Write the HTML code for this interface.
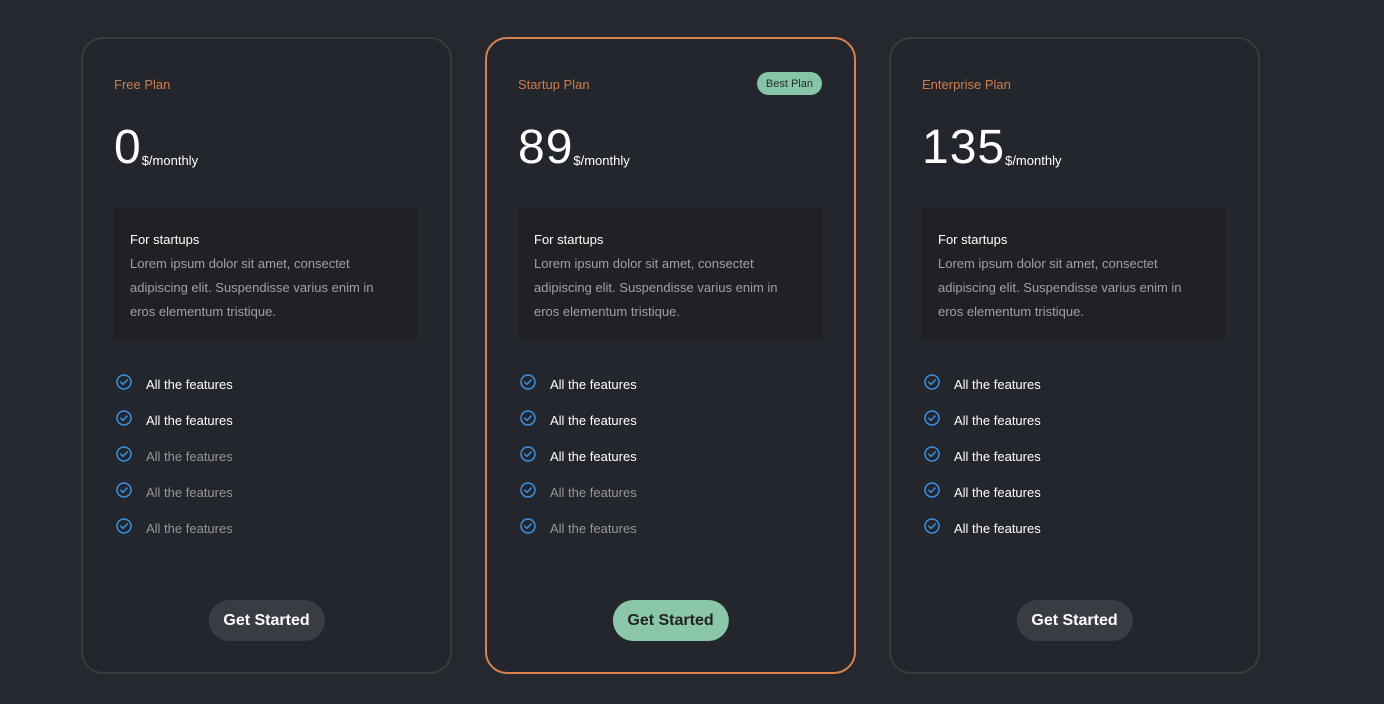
<!DOCTYPE html>
<html><head><style>
*{box-sizing:border-box;margin:0;padding:0}
body{width:1384px;height:704px;background:#262830;font-family:"Liberation Sans",sans-serif;position:relative;overflow:hidden}
.card{position:absolute;top:37px;width:371px;height:637px;border:2px solid #393b3f;border-radius:22px;background:#24262e}
.card.best{border-color:#d8834f}
.title{position:absolute;left:31px;top:38px;font-size:13px;color:#d07c4a}
.badge{position:absolute;right:32px;top:33px;background:#86c5a6;color:#2a2c30;font-size:11px;padding:0 9px;height:23px;line-height:24px;border-radius:12px}
.price{position:absolute;left:31px;top:81px;font-size:48px;color:#fff;line-height:56px;white-space:nowrap;letter-spacing:1px}
.price span{font-size:13px;letter-spacing:0;position:relative;top:2px}
.desc{position:absolute;left:31px;top:169px;width:304px;height:132px;background:#1f2125;padding:24px 16px}
.desc h4{font-weight:normal;font-size:13px;color:#fff;margin-bottom:5px}
.desc p{font-size:13px;line-height:24px;color:#9ea0a4}
.feat{position:absolute;left:31px;top:338px}
.feat div{height:36px;display:flex;align-items:flex-start;font-size:13px;color:#fff}
.feat div.dim{color:#94969a}
.feat svg{margin:0 14px 0 2px;margin-top:-3px}
.btn{position:absolute;left:50%;transform:translateX(-50%);top:561px;height:41px;line-height:41px;padding:0 15px;border-radius:21px;background:#3a3c44;color:#fff;font-weight:bold;font-size:16px;white-space:nowrap}
.best .btn{background:#8ac7a8;color:#222}
</style></head><body>
<svg width="0" height="0" style="position:absolute"><defs><symbol id="ck" viewBox="0 0 16 16"><circle cx="8" cy="8" r="7" fill="none" stroke="#3a8fe0" stroke-width="1.5"/><path d="M4.8 8.2l2.2 2.2 4.2-4.4" fill="none" stroke="#3a8fe0" stroke-width="1.5" stroke-linecap="round" stroke-linejoin="round"/></symbol></defs></svg>

<div class="card" style="left:81px">
<div class="title">Free Plan</div>
<div class="price">0<span>$/monthly</span></div>
<div class="desc"><h4>For startups</h4><p>Lorem ipsum dolor sit amet, consectet adipiscing elit. Suspendisse varius enim in eros elementum tristique.</p></div>
<div class="feat">
<div><svg width="16" height="16"><use href="#ck"/></svg>All the features</div>
<div><svg width="16" height="16"><use href="#ck"/></svg>All the features</div>
<div class="dim"><svg width="16" height="16"><use href="#ck"/></svg>All the features</div>
<div class="dim"><svg width="16" height="16"><use href="#ck"/></svg>All the features</div>
<div class="dim"><svg width="16" height="16"><use href="#ck"/></svg>All the features</div>
</div>
<div class="btn">Get Started</div>
</div>

<div class="card best" style="left:485px">
<div class="title">Startup Plan</div>
<div class="badge">Best Plan</div>
<div class="price">89<span>$/monthly</span></div>
<div class="desc"><h4>For startups</h4><p>Lorem ipsum dolor sit amet, consectet adipiscing elit. Suspendisse varius enim in eros elementum tristique.</p></div>
<div class="feat">
<div><svg width="16" height="16"><use href="#ck"/></svg>All the features</div>
<div><svg width="16" height="16"><use href="#ck"/></svg>All the features</div>
<div><svg width="16" height="16"><use href="#ck"/></svg>All the features</div>
<div class="dim"><svg width="16" height="16"><use href="#ck"/></svg>All the features</div>
<div class="dim"><svg width="16" height="16"><use href="#ck"/></svg>All the features</div>
</div>
<div class="btn">Get Started</div>
</div>

<div class="card" style="left:889px">
<div class="title">Enterprise Plan</div>
<div class="price">135<span>$/monthly</span></div>
<div class="desc"><h4>For startups</h4><p>Lorem ipsum dolor sit amet, consectet adipiscing elit. Suspendisse varius enim in eros elementum tristique.</p></div>
<div class="feat">
<div><svg width="16" height="16"><use href="#ck"/></svg>All the features</div>
<div><svg width="16" height="16"><use href="#ck"/></svg>All the features</div>
<div><svg width="16" height="16"><use href="#ck"/></svg>All the features</div>
<div><svg width="16" height="16"><use href="#ck"/></svg>All the features</div>
<div><svg width="16" height="16"><use href="#ck"/></svg>All the features</div>
</div>
<div class="btn">Get Started</div>
</div>
</body></html>
